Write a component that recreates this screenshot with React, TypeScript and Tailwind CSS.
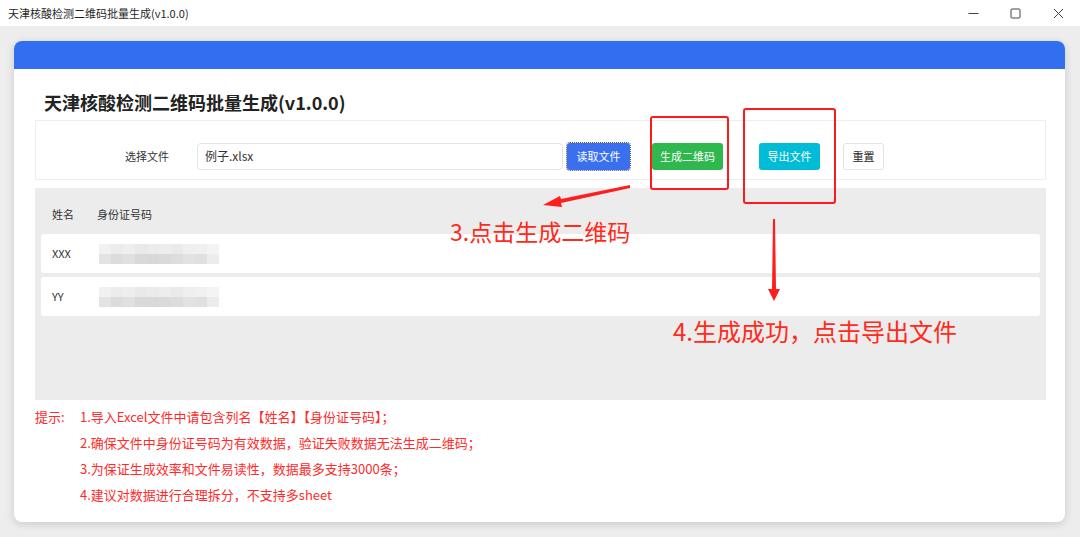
import React from 'react'

const font = { fontFamily: '"Noto Sans CJK SC", "Noto Sans", sans-serif' }

const rows = [
  { name: 'XXX' },
  { name: 'YY' },
]

const tips = [
  '1.导入Excel文件中请包含列名【姓名】【身份证号码】；',
  '2.确保文件中身份证号码为有效数据，验证失败数据无法生成二维码；',
  '3.为保证生成效率和文件易读性，数据最多支持3000条；',
  '4.建议对数据进行合理拆分，不支持多sheet',
]

function BlurredId() {
  const top = ['#f1f1f1', '#ececec', '#eeeeee', '#e9e9e9', '#ebebeb', '#ededed', '#eaeaea', '#efefef', '#f0f0f0', '#f4f4f4']
  const bottom = ['#e3e3e3', '#dcdcdc', '#e0e0e0', '#d9d9d9', '#d8d8d8', '#dadada', '#dddddd', '#e2e2e2', '#e0e0e0', '#ececec']
  return (
    <svg width="120" height="20" viewBox="0 0 120 20" className="block">
      {top.map((c, i) => (
        <rect key={`t${i}`} x={i * 12} y={0} width={12} height={10} fill={c} />
      ))}
      {bottom.map((c, i) => (
        <rect key={`b${i}`} x={i * 12} y={10} width={12} height={10} fill={c} />
      ))}
    </svg>
  )
}

export default function App() {
  return (
    <div className="relative flex h-[537px] w-[1080px] flex-col overflow-hidden bg-[#ededed]" style={font}>
      {/* window title bar */}
      <div className="flex h-[26px] shrink-0 items-center justify-between bg-white pl-[8px]">
        <span className="text-[11px] text-[#1f1f1f]">天津核酸检测二维码批量生成(v1.0.0)</span>
        <div className="flex h-full items-center">
          <div className="flex w-[42px] justify-center">
            <svg width="11" height="11" viewBox="0 0 11 11"><path d="M0.5 5.5h10" stroke="#444" strokeWidth="1" /></svg>
          </div>
          <div className="flex w-[42px] justify-center">
            <svg width="11" height="11" viewBox="0 0 11 11"><rect x="1" y="1" width="9" height="9" rx="1" fill="none" stroke="#444" strokeWidth="1" /></svg>
          </div>
          <div className="flex w-[44px] justify-center">
            <svg width="11" height="11" viewBox="0 0 11 11"><path d="M1 1l9 9M10 1l-9 9" stroke="#444" strokeWidth="1" /></svg>
          </div>
        </div>
      </div>

      <div className="flex-1 pl-[14px] pt-[15px]">
        <div className="flex h-[481px] w-[1051px] flex-col overflow-hidden rounded-[8px] bg-white shadow-[0_2px_8px_rgba(0,0,0,0.15)]">
          <div className="h-[28px] shrink-0 bg-[#316ef0]" />

          <div className="flex flex-col pl-[21px] pr-[19px]">
            <h1 className="mt-[20px] pl-[9px] text-[18px] font-bold leading-[26px] text-[#222]">
              天津核酸检测二维码批量生成(v1.0.0)
            </h1>

            <div className="mt-[5px] flex h-[60px] items-center border border-[#eeeeee] pt-[12px]">
              <span className="ml-[89px] text-[11px] text-[#333]">选择文件</span>
              <div className="ml-[28px] flex h-[27px] w-[366px] items-center rounded-[4px] border border-[#e3e3e3] px-[7px] text-[12px] text-[#333]">
                例子.xlsx
              </div>
              <button className="ml-[4px] h-[27px] w-[63px] rounded-[3px] bg-[#3a6ff0] text-[11px] text-white outline-dotted outline-1 outline-[#555]">
                读取文件
              </button>
              <button className="ml-[22px] h-[27px] w-[71px] rounded-[3px] bg-[#2eb84e] text-[11px] text-white">
                生成二维码
              </button>
              <button className="ml-[36px] h-[27px] w-[61px] rounded-[3px] bg-[#00bcd6] text-[11px] text-white">
                导出文件
              </button>
              <button className="ml-[23px] h-[27px] w-[41px] rounded-[3px] border border-[#e3e3e3] bg-white text-[11px] text-[#222]">
                重置
              </button>
            </div>

            <div className="mt-[8px] flex h-[212px] flex-col bg-[#ececec] px-[6px]">
              <div className="flex h-[46px] items-center pt-[6px] text-[11px] text-[#333]">
                <span className="ml-[11px] w-[45px]">姓名</span>
                <span>身份证号码</span>
              </div>
              <div className="flex flex-col gap-[4px]">
                {rows.map((row) => (
                  <div key={row.name} className="flex h-[39px] items-center rounded-[3px] bg-white text-[11px] text-[#333]">
                    <span className="ml-[11px] w-[47px]">{row.name}</span>
                    <BlurredId />
                  </div>
                ))}
              </div>
            </div>

            <div className="mt-[4px] flex text-[13px] leading-[26px] text-[#ff2b2b]">
              <span className="w-[45px] shrink-0">提示:</span>
              <div className="flex flex-col">
                {tips.map((tip) => (
                  <span key={tip}>{tip}</span>
                ))}
              </div>
            </div>
          </div>
        </div>
      </div>

      {/* annotations */}
      <div className="absolute left-[650px] top-[116px] h-[74px] w-[79px] rounded-[3px] border-2 border-[#ff1a1a]" />
      <div className="absolute left-[743px] top-[108px] h-[96px] w-[93px] rounded-[3px] border-2 border-[#ff1a1a]" />
      <svg className="absolute left-0 top-0" width="1080" height="537" viewBox="0 0 1080 537" style={{ pointerEvents: 'none' }}>
        <path d="M630 185 L561 199 L560 196 L543 205 L562 207 L561 203 L630 188 Z" fill="#ff1e1e" />
        <path d="M773 219 L775 219 L776 289 L780 289 L774 301 L768 289 L772 289 Z" fill="#ff1e1e" />
      </svg>
      <span className="absolute left-[450px] top-[215px] text-[23px] leading-[32px] text-[#ff2a1a]">3.点击生成二维码</span>
      <span className="absolute left-[673px] top-[315px] text-[24px] leading-[32px] text-[#ff2a1a]">4.生成成功，点击导出文件</span>
    </div>
  )
}
